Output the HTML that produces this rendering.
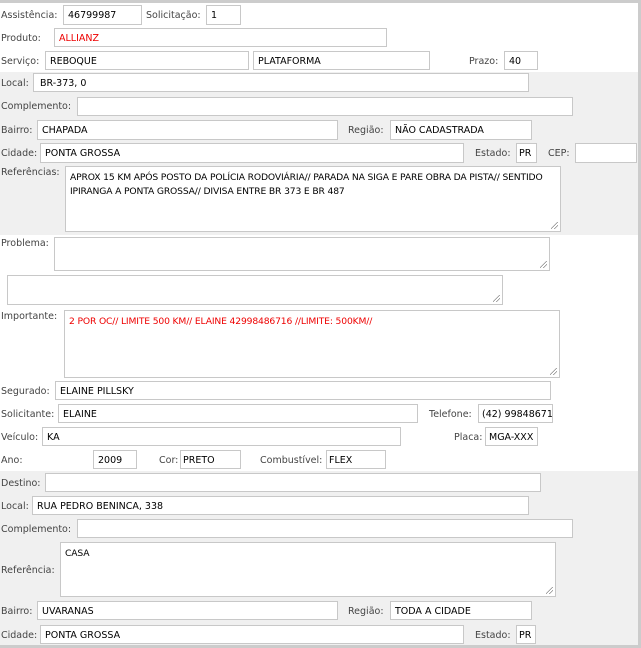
<!DOCTYPE html>
<html><head><meta charset="utf-8"><style>
*{margin:0;padding:0;box-sizing:border-box}
body{width:641px;height:648px;position:relative;overflow:hidden;background:#fff;font-family:"DejaVu Sans","Liberation Sans",sans-serif;font-size:9.5px;color:#444}
.g{position:absolute;left:0;width:638px;background:#f0f0f0}
.l{position:absolute;line-height:12px;white-space:nowrap;margin-top:1px}
.i{position:absolute;background:#fff;border:1px solid #c8c8c8;color:#000;padding:1px 4px 0;line-height:16px;white-space:nowrap;overflow:hidden}
.t{position:absolute;background:#fff;border:1px solid #c8c8c8;color:#000;padding:4px 2px 4px 4px;line-height:14px;overflow:hidden;font-size:9.2px;letter-spacing:-0.15px}
.t:after{content:"";position:absolute;right:2px;bottom:2px;width:7px;height:7px;background:linear-gradient(135deg,transparent 45%,#888 45%,#888 52%,transparent 52%,transparent 70%,#888 70%,#888 77%,transparent 77%)}
.r{color:#e00}
</style></head><body>
<div style="position:absolute;left:0;top:0;width:641px;height:3px;background:#ccc"></div>
<div style="position:absolute;left:638px;top:0;width:3px;height:648px;background:#ccc"></div>
<div class="g" style="top:72px;height:163px"></div>
<div class="g" style="top:471px;height:174px"></div>
<div style="position:absolute;left:0;top:645px;width:641px;height:3px;background:#ccc"></div>

<div class="l" style="left:1px;top:9px">Assistência:</div><div class="i" style="left:63px;top:5px;width:79px;height:20px;line-height:18px">46799987</div>
<div class="l" style="left:146px;top:9px">Solicitação:</div><div class="i" style="left:206px;top:5px;width:35px;height:20px;line-height:18px">1</div>
<div class="l" style="left:1px;top:32px">Produto:</div><div class="i r" style="left:54px;top:28px;width:333px;height:19px;line-height:17px">ALLIANZ</div>
<div class="l" style="left:1px;top:55px">Serviço:</div><div class="i" style="left:45px;top:51px;width:204px;height:19px;line-height:17px">REBOQUE</div>
<div class="i" style="left:253px;top:51px;width:177px;height:19px;line-height:17px">PLATAFORMA</div>
<div class="l" style="left:469px;top:55px">Prazo:</div><div class="i" style="left:504px;top:51px;width:34px;height:19px;line-height:17px">40</div>

<div class="l" style="left:1px;top:77px">Local:</div><div class="i" style="left:33px;top:73px;width:496px;height:19px;line-height:17px;padding-left:6px">BR-373, 0</div>
<div class="l" style="left:1px;top:100px">Complemento:</div><div class="i" style="left:77px;top:97px;width:496px;height:19px"></div>
<div class="l" style="left:1px;top:124px">Bairro:</div><div class="i" style="left:37px;top:120px;width:301px;height:20px;line-height:18px">CHAPADA</div>
<div class="l" style="left:348px;top:124px">Região:</div><div class="i" style="left:390px;top:120px;width:142px;height:20px;line-height:18px">NÃO CADASTRADA</div>
<div class="l" style="left:1px;top:147px">Cidade:</div><div class="i" style="left:40px;top:143px;width:424px;height:20px;line-height:18px">PONTA GROSSA</div>
<div class="l" style="left:475px;top:147px">Estado:</div><div class="i" style="left:516px;top:143px;width:21px;height:20px;line-height:18px;padding:1px 2px 0">PR</div>
<div class="l" style="left:548px;top:147px">CEP:</div><div class="i" style="left:575px;top:143px;width:62px;height:20px"></div>
<div class="l" style="left:1px;top:166px">Referências:</div><div class="t" style="left:65px;top:166px;width:496px;height:66px">APROX 15 KM APÓS POSTO DA POLÍCIA RODOVIÁRIA// PARADA NA SIGA E PARE OBRA DA PISTA// SENTIDO IPIRANGA A PONTA GROSSA// DIVISA ENTRE BR 373 E BR 487</div>

<div class="l" style="left:1px;top:237px">Problema:</div><div class="t" style="left:54px;top:237px;width:496px;height:34px"></div>
<div class="t" style="left:7px;top:275px;width:496px;height:30px"></div>
<div class="l" style="left:1px;top:310px">Importante:</div><div class="t r" style="left:64px;top:310px;width:496px;height:68px">2 POR OC// LIMITE 500 KM// ELAINE 42998486716 //LIMITE: 500KM//</div>

<div class="l" style="left:1px;top:385px">Segurado:</div><div class="i" style="left:55px;top:381px;width:496px;height:19px;line-height:17px">ELAINE PILLSKY</div>
<div class="l" style="left:1px;top:408px">Solicitante:</div><div class="i" style="left:58px;top:404px;width:360px;height:19px;line-height:17px">ELAINE</div>
<div class="l" style="left:429px;top:408px">Telefone:</div><div class="i" style="left:478px;top:404px;width:75px;height:19px;line-height:17px;padding:1px 3px 0">(42) 99848671€</div>
<div class="l" style="left:1px;top:431px">Veículo:</div><div class="i" style="left:42px;top:427px;width:359px;height:19px;line-height:17px">KA</div>
<div class="l" style="left:454px;top:431px">Placa:</div><div class="i" style="left:485px;top:427px;width:53px;height:19px;line-height:17px;padding:1px 3px 0">MGA-XXX</div>
<div class="l" style="left:1px;top:454px">Ano:</div><div class="i" style="left:93px;top:450px;width:44px;height:19px;line-height:17px">2009</div>
<div class="l" style="left:159px;top:454px">Cor:</div><div class="i" style="left:180px;top:450px;width:61px;height:19px;line-height:17px;padding:1px 2px 0">PRETO</div>
<div class="l" style="left:260px;top:454px">Combustível:</div><div class="i" style="left:326px;top:450px;width:60px;height:19px;line-height:17px;padding:1px 2px 0">FLEX</div>

<div class="l" style="left:1px;top:477px">Destino:</div><div class="i" style="left:45px;top:473px;width:496px;height:19px"></div>
<div class="l" style="left:1px;top:500px">Local:</div><div class="i" style="left:32px;top:496px;width:497px;height:19px;line-height:17px">RUA PEDRO BENINCA, 338</div>
<div class="l" style="left:1px;top:523px">Complemento:</div><div class="i" style="left:77px;top:519px;width:496px;height:19px"></div>
<div class="l" style="left:1px;top:564px">Referência:</div><div class="t" style="left:60px;top:542px;width:496px;height:55px">CASA</div>
<div class="l" style="left:1px;top:605px">Bairro:</div><div class="i" style="left:37px;top:601px;width:301px;height:19px;line-height:17px">UVARANAS</div>
<div class="l" style="left:348px;top:605px">Região:</div><div class="i" style="left:390px;top:601px;width:142px;height:19px;line-height:17px">TODA A CIDADE</div>
<div class="l" style="left:1px;top:629px">Cidade:</div><div class="i" style="left:40px;top:625px;width:424px;height:19px;line-height:17px">PONTA GROSSA</div>
<div class="l" style="left:475px;top:629px">Estado:</div><div class="i" style="left:516px;top:625px;width:20px;height:19px;line-height:17px;padding:1px 2px 0">PR</div>
</body></html>
